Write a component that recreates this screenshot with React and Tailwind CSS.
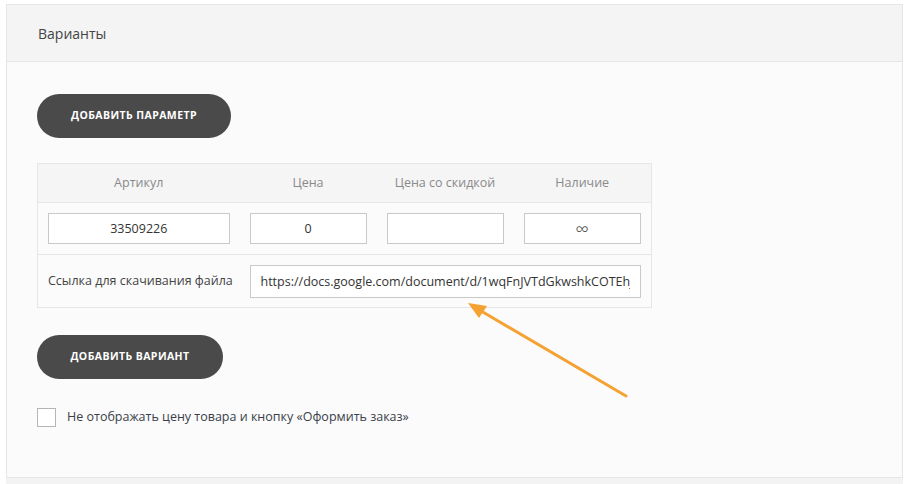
import { useState } from 'react'

const font = { fontFamily: '"Open Sans", "Liberation Sans", sans-serif' }

const PillButton = ({ children, width }) => (
  <button
    className={`${width} h-[44px] rounded-full bg-[#4a4a4a] text-white text-[10.5px] font-bold uppercase tracking-[0.04em] flex items-center justify-center`}
  >
    {children}
  </button>
)

const Field = ({ value, className = '', center = true }) => (
  <input
    readOnly
    value={value}
    className={`h-[31px] w-full border border-[#c9c9c9] bg-white px-[10px] text-[12.5px] text-[#333] outline-none ${center ? 'text-center' : ''} ${className}`}
  />
)

export default function App() {
  const [hidePrice, setHidePrice] = useState(false)

  return (
    <div className="relative w-[909px] h-[484px] bg-white overflow-hidden" style={font}>
      <div className="ml-[6px] mt-[4px] w-[897px] border border-[#e6e6e6] bg-[#fbfbfb]">
        {/* Header */}
        <div className="h-[57px] bg-[#f4f4f4] border-b border-[#e6e6e6] flex items-center pl-[31px]">
          <h2 className="text-[14px] text-[#444]">Варианты</h2>
        </div>

        {/* Body */}
        <div className="h-[415px] pl-[30px] pt-[32px]">
          <PillButton width="w-[194px]">Добавить параметр</PillButton>

          <table className="mt-[25px] w-[614px] table-fixed border-collapse border border-[#e6e6e6] text-[12.5px]">
            <thead>
              <tr className="h-[39px] bg-[#f5f5f5] text-[#8a8a8a]">
                <th className="w-[202px] font-normal">Артикул</th>
                <th className="w-[137px] font-normal">Цена</th>
                <th className="w-[137px] font-normal">Цена со скидкой</th>
                <th className="w-[138px] font-normal">Наличие</th>
              </tr>
            </thead>
            <tbody>
              <tr className="h-[52px] border-t border-[#e6e6e6]">
                <td className="px-[10px]"><Field value="33509226" /></td>
                <td className="px-[10px]"><Field value="0" /></td>
                <td className="px-[10px]"><Field value="" /></td>
                <td className="px-[10px]"><Field value="∞" className="text-[19px] font-light" /></td>
              </tr>
              <tr className="h-[53px] border-t border-[#e6e6e6]">
                <td className="px-[10px] whitespace-nowrap text-[#444]">Ссылка для скачивания файла</td>
                <td colSpan={3} className="px-[10px]">
                  <Field
                    value="https://docs.google.com/document/d/1wqFnJVTdGkwshkCOTEhJWxyz"
                    center={false}
                    className="h-[33px] border-[#a6a6a6]"
                  />
                </td>
              </tr>
            </tbody>
          </table>

          <div className="mt-[27px]">
            <PillButton width="w-[186px]">Добавить вариант</PillButton>
          </div>

          <label className="mt-[29px] flex items-center gap-[11px] cursor-pointer">
            <input
              type="checkbox"
              checked={hidePrice}
              onChange={() => setHidePrice(!hidePrice)}
              className="appearance-none w-[19px] h-[19px] border border-[#b5b5b5] bg-white checked:bg-[#4a4a4a]"
            />
            <span className="text-[12.5px] text-[#3a3f4a]">Не отображать цену товара и кнопку «Оформить заказ»</span>
          </label>
        </div>
      </div>
      <div className="ml-[6px] w-[897px] h-[8px] bg-[#f3f3f3]" />

      {/* Annotation arrow */}
      <svg className="absolute left-0 top-0 pointer-events-none" width="909" height="484">
        <line x1="626" y1="396" x2="476" y2="308" stroke="#f5a233" strokeWidth="3" strokeLinecap="round" />
        <polygon points="468,303 487,306 479,318" fill="#f5a233" />
      </svg>
    </div>
  )
}
